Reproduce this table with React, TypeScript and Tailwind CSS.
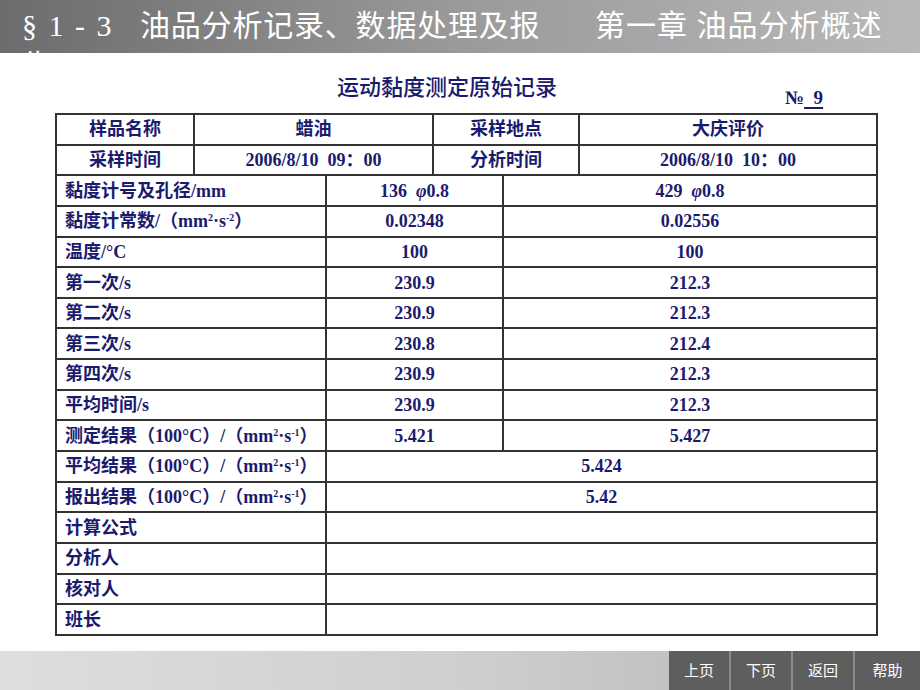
import React from "react";

const navy = "text-[#1b1b6e]";

type Cell = { t?: React.ReactNode; span: number; align?: "left" | "center" };

const sup = (s: string) => <sup className="text-[10px] relative -top-[6px]">{s}</sup>;
const unit = (
  <>
    （100°C）/（mm{sup("2")}·s{sup("-1")}）
  </>
);

const rows: Cell[][] = [
  [
    { t: "样品名称", span: 1 },
    { t: "蜡油", span: 2 },
    { t: "采样地点", span: 2 },
    { t: "大庆评价", span: 1 },
  ],
  [
    { t: "采样时间", span: 1 },
    { t: "2006/8/10\u00a0\u00a009：00", span: 2 },
    { t: "分析时间", span: 2 },
    { t: "2006/8/10\u00a0\u00a010：00", span: 1 },
  ],
  [
    { t: "黏度计号及孔径/mm", span: 2, align: "left" },
    { t: <>136&nbsp;&nbsp;<i>φ</i>0.8</>, span: 2 },
    { t: <>429&nbsp;&nbsp;<i>φ</i>0.8</>, span: 2 },
  ],
  [
    { t: <>黏度计常数/（mm{sup("2")}·s{sup("-2")}）</>, span: 2, align: "left" },
    { t: "0.02348", span: 2 },
    { t: "0.02556", span: 2 },
  ],
  [
    { t: "温度/°C", span: 2, align: "left" },
    { t: "100", span: 2 },
    { t: "100", span: 2 },
  ],
  [
    { t: "第一次/s", span: 2, align: "left" },
    { t: "230.9", span: 2 },
    { t: "212.3", span: 2 },
  ],
  [
    { t: "第二次/s", span: 2, align: "left" },
    { t: "230.9", span: 2 },
    { t: "212.3", span: 2 },
  ],
  [
    { t: "第三次/s", span: 2, align: "left" },
    { t: "230.8", span: 2 },
    { t: "212.4", span: 2 },
  ],
  [
    { t: "第四次/s", span: 2, align: "left" },
    { t: "230.9", span: 2 },
    { t: "212.3", span: 2 },
  ],
  [
    { t: "平均时间/s", span: 2, align: "left" },
    { t: "230.9", span: 2 },
    { t: "212.3", span: 2 },
  ],
  [
    { t: <>测定结果{unit}</>, span: 2, align: "left" },
    { t: "5.421", span: 2 },
    { t: "5.427", span: 2 },
  ],
  [
    { t: <>平均结果{unit}</>, span: 2, align: "left" },
    { t: "5.424", span: 4 },
  ],
  [
    { t: <>报出结果{unit}</>, span: 2, align: "left" },
    { t: "5.42", span: 4 },
  ],
  [
    { t: "计算公式", span: 2, align: "left" },
    { t: "", span: 4 },
  ],
  [
    { t: "分析人", span: 2, align: "left" },
    { t: "", span: 4 },
  ],
  [
    { t: "核对人", span: 2, align: "left" },
    { t: "", span: 4 },
  ],
  [
    { t: "班长", span: 2, align: "left" },
    { t: "", span: 4 },
  ],
];

export default function App() {
  return (
    <div
      className="w-[920px] h-[690px] bg-white flex flex-col overflow-hidden"
      style={{ fontFamily: '"Liberation Serif", "Noto Sans CJK SC", serif' }}
    >
      {/* header */}
      <div className="h-[53px] shrink-0 flex bg-gradient-to-r from-[#6c6c6c] via-[#9a9a9a] to-[#b9b9b9] text-white">
        <div className="w-[548px] h-full overflow-hidden pl-[22px] pt-[6px] text-[30px] leading-[40px]">
          <span className="inline-block w-[118px] whitespace-pre tracking-[2px]">§ 1 - 3</span>
          <span className="tracking-[0.8px]">油品分析记录、数据处理及报告</span>
        </div>
        <div className="pl-[47px] pt-[6px] text-[30px] leading-[40px] whitespace-nowrap tracking-[1px]">
          第一章&nbsp;油品分析概述
        </div>
      </div>

      {/* title */}
      <div className="relative h-[60px] shrink-0">
        <div className={`absolute left-[337px] top-[21px] text-[22px] leading-[28px] font-medium ${navy}`}>
          运动黏度测定原始记录
        </div>
        <div className={`absolute left-[785px] top-[33px] text-[19px] font-bold leading-[24px] ${navy}`}>
          №<span className="underline underline-offset-[3px] decoration-[1.5px]">&nbsp;&nbsp;9</span>
        </div>
      </div>

      {/* table */}
      <div className="pl-[55px]">
        <table
          className={`table-fixed border-collapse w-[821px] text-[18px] font-bold ${navy}`}
        >
          <colgroup>
            <col className="w-[138px]" />
            <col className="w-[132px]" />
            <col className="w-[107px]" />
            <col className="w-[70px]" />
            <col className="w-[76px]" />
            <col className="w-[298px]" />
          </colgroup>
          <tbody>
            {rows.map((r, i) => (
              <tr key={i} className="h-[30.65px]">
                {r.map((c, j) => (
                  <td
                    key={j}
                    colSpan={c.span}
                    className={`border-2 border-[#333] p-0 leading-[20px] whitespace-nowrap ${
                      c.align === "left" ? "text-left pl-[8px]" : "text-center"
                    }`}
                  >
                    {c.t}
                  </td>
                ))}
              </tr>
            ))}
          </tbody>
        </table>
      </div>

      <div className="flex-1" />

      {/* bottom bar */}
      <div className="h-[39px] shrink-0 flex bg-gradient-to-r from-[#dedede] via-[#cfcfcf] to-[#b3b3b3]">
        <div className="flex-1" />
        <div
          className="flex h-full bg-[#5e5e5e] text-white text-[15px]"
          style={{ fontFamily: '"Noto Sans CJK SC", sans-serif' }}
        >
          {["上页", "下页", "返回", "帮助"].map((b, i) => (
            <div
              key={b}
              className={`flex items-center justify-center h-full ${
                i === 3 ? "w-[65px]" : "w-[62px] border-r-2 border-[#8a8a8a]"
              }`}
            >
              {b}
            </div>
          ))}
        </div>
      </div>
    </div>
  );
}
